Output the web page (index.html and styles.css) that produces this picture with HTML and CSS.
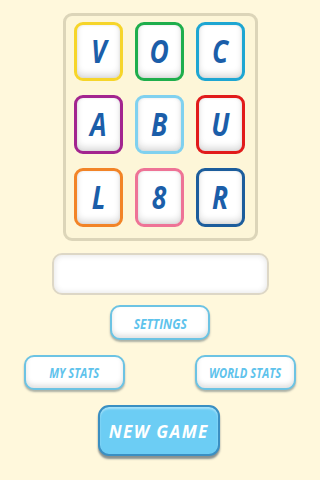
FILE: index.html
```html
<!DOCTYPE html>
<html>
<head>
<meta charset="utf-8">
<link rel="stylesheet" href="styles.css">
</head>
<body>
<div class="screen">
  <div class="board">
    <div class="tile c-yellow"><span>V</span></div>
    <div class="tile c-green"><span>O</span></div>
    <div class="tile c-teal"><span>C</span></div>
    <div class="tile c-purple"><span>A</span></div>
    <div class="tile c-sky"><span>B</span></div>
    <div class="tile c-red"><span>U</span></div>
    <div class="tile c-orange"><span>L</span></div>
    <div class="tile c-pink"><span>8</span></div>
    <div class="tile c-navy"><span>R</span></div>
  </div>
  <div class="field"></div>
  <div class="btn settings"><span>SETTINGS</span></div>
  <div class="row">
    <div class="btn stats"><span>MY STATS</span></div>
    <div class="btn stats"><span>WORLD STATS</span></div>
  </div>
  <div class="newgame"><span>NEW GAME</span></div>
</div>
</body>
</html>
```
FILE: styles.css
```css
html, body {
  margin: 0;
  padding: 0;
  background: #fff8dc;
}
body {
  width: 320px;
  height: 480px;
  overflow: hidden;
  font-family: "Open Sans", "DejaVu Sans", sans-serif;
}
.screen {
  display: flex;
  flex-direction: column;
  align-items: center;
}
.board {
  margin-top: 13px;
  margin-left: 1px;
  width: 195px;
  height: 228px;
  box-sizing: border-box;
  border: 3px solid #dcd5b9;
  border-radius: 9px;
  background: #fdf6d8;
  display: grid;
  grid-template-columns: repeat(3, 49px);
  grid-auto-rows: 59px;
  column-gap: 12px;
  row-gap: 14px;
  padding: 6px 0 0 8px;
}
.tile {
  box-sizing: border-box;
  border: 3px solid;
  border-radius: 9px;
  background: #fff;
  box-shadow: inset 0 -4px 6px rgba(0,0,0,0.13), inset 0 0 3px rgba(0,0,0,0.08);
  color: #1b5ea9;
  font-style: italic;
  font-weight: 700;
  font-size: 33px;
  display: flex;
  align-items: center;
  justify-content: center;
  padding-bottom: 2px;
}
.tile span {
  display: inline-block;
  transform: scaleX(0.8);
}
.c-yellow { border-color: #f6d52a; }
.c-green { border-color: #1fae4c; }
.c-teal { border-color: #1ea6d2; }
.c-purple { border-color: #a3258f; }
.c-sky { border-color: #80d1ef; }
.c-red { border-color: #e11b1b; }
.c-orange { border-color: #f28427; }
.c-pink { border-color: #ee7396; }
.c-navy { border-color: #1c5d9c; }
.field {
  margin-top: 12px;
  width: 217px;
  height: 42px;
  box-sizing: border-box;
  border: 2px solid #ddd7c6;
  border-radius: 10px;
  background: #fff;
  box-shadow: inset 0 0 6px rgba(0,0,0,0.12);
}
.btn {
  box-sizing: border-box;
  height: 35px;
  border: 2px solid #6cc3e3;
  border-radius: 10px;
  background: #fff;
  box-shadow: inset 0 -3px 5px rgba(0,0,0,0.12), 0 2px 2px rgba(70,90,100,0.45);
  color: #5fc3ec;
  font-style: italic;
  font-weight: 700;
  font-size: 15px;
  display: flex;
  align-items: center;
  justify-content: center;
}
.btn span {
  display: inline-block;
  transform: scaleX(0.8);
  white-space: nowrap;
}
.settings {
  margin-top: 10px;
  width: 100px;
}
.row {
  margin-top: 15px;
  width: 272px;
  display: flex;
  justify-content: space-between;
}
.stats {
  width: 101px;
  font-size: 14px;
}
.newgame {
  margin-top: 15px;
  margin-left: -2px;
  width: 122px;
  height: 51px;
  box-sizing: border-box;
  border: 2px solid #3a8fc2;
  border-radius: 11px;
  background: #6ccdf4;
  box-shadow: 0 3px 2px rgba(40,60,80,0.55), inset 0 2px 2px rgba(255,255,255,0.4);
  color: #fff;
  font-style: italic;
  font-weight: 700;
  font-size: 18px;
  letter-spacing: 1.5px;
  display: flex;
  align-items: center;
  justify-content: center;
}
.newgame span {
  display: inline-block;
  transform: scaleX(0.95);
  white-space: nowrap;
}
```
